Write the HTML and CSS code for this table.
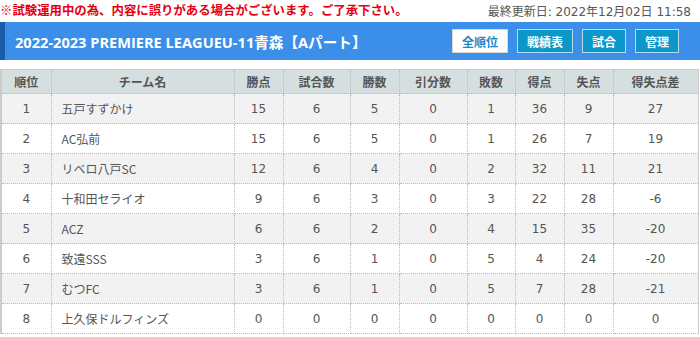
FILE: index.html
```html
<!DOCTYPE html>
<html lang="ja">
<head>
<meta charset="utf-8">
<link rel="stylesheet" href="styles.css">
</head>
<body>
<div class="top">
  <span class="notice">※試験運用中の為、内容に誤りがある場合がございます。ご了承下さい。</span>
  <span class="updated">最終更新日: 2022年12月02日 11:58</span>
</div>
<div class="bar">
  <h1 class="title">2022-2023 PREMIERE LEAGUEU-11青森【Aパート】</h1>
  <nav class="btns">
    <a class="btn active">全順位</a>
    <a class="btn">戦績表</a>
    <a class="btn">試合</a>
    <a class="btn">管理</a>
  </nav>
</div>
<table class="rank">
  <colgroup>
    <col class="c1"><col class="c2"><col class="c3"><col class="c4"><col class="c5">
    <col class="c6"><col class="c7"><col class="c8"><col class="c9"><col class="c10">
  </colgroup>
  <thead>
    <tr><th>順位</th><th>チーム名</th><th>勝点</th><th>試合数</th><th>勝数</th><th>引分数</th><th>敗数</th><th>得点</th><th>失点</th><th>得失点差</th></tr>
  </thead>
  <tbody>
    <tr><td>1</td><td class="team">五戸すずかけ</td><td>15</td><td>6</td><td>5</td><td>0</td><td>1</td><td>36</td><td>9</td><td>27</td></tr>
    <tr><td>2</td><td class="team">AC弘前</td><td>15</td><td>6</td><td>5</td><td>0</td><td>1</td><td>26</td><td>7</td><td>19</td></tr>
    <tr><td>3</td><td class="team">リベロ八戸SC</td><td>12</td><td>6</td><td>4</td><td>0</td><td>2</td><td>32</td><td>11</td><td>21</td></tr>
    <tr><td>4</td><td class="team">十和田セライオ</td><td>9</td><td>6</td><td>3</td><td>0</td><td>3</td><td>22</td><td>28</td><td>-6</td></tr>
    <tr><td>5</td><td class="team">ACZ</td><td>6</td><td>6</td><td>2</td><td>0</td><td>4</td><td>15</td><td>35</td><td>-20</td></tr>
    <tr><td>6</td><td class="team">致遠SSS</td><td>3</td><td>6</td><td>1</td><td>0</td><td>5</td><td>4</td><td>24</td><td>-20</td></tr>
    <tr><td>7</td><td class="team">むつFC</td><td>3</td><td>6</td><td>1</td><td>0</td><td>5</td><td>7</td><td>28</td><td>-21</td></tr>
    <tr><td>8</td><td class="team">上久保ドルフィンズ</td><td>0</td><td>0</td><td>0</td><td>0</td><td>0</td><td>0</td><td>0</td><td>0</td></tr>
  </tbody>
</table>
</body>
</html>
```
FILE: styles.css
```css
* { box-sizing: border-box; }
body {
  margin: 0;
  background: #fff;
  font-family: "DejaVu Sans", "Noto Sans CJK JP", sans-serif;
  color: #555;
}
.top {
  display: flex;
  justify-content: space-between;
  align-items: center;
  height: 20px;
  padding-right: 9px;
  font-size: 12px;
}
.notice {
  color: #e60012;
  font-weight: bold;
  font-size: 12.4px;
  font-family: "Noto Sans CJK JP", sans-serif;
}
.updated {
  color: #555;
  font-family: "DejaVu Sans", "Noto Sans CJK JP", sans-serif;
}
.bar {
  display: flex;
  align-items: center;
  justify-content: space-between;
  height: 38px;
  margin-top: 2px;
  background: #3b8fe8;
  border-left: 5px solid #1a5ca8;
  padding-left: 10px;
  padding-right: 21px;
}
.title {
  margin: 0;
  color: #fff;
  font-size: 14.6px;
  font-weight: bold;
  font-family: "Open Sans", "Noto Sans CJK JP", sans-serif;
}
.btns {
  display: flex;
  gap: 9px;
}
.btn {
  display: flex;
  align-items: center;
  justify-content: center;
  height: 24px;
  padding: 0 9px;
  background: #0b97c9;
  border: 1px solid #b9dcea;
  color: #fff;
  font-size: 12px;
  font-weight: bold;
  font-family: "Noto Sans CJK JP", sans-serif;
}
.btn.active {
  background: #fff;
  color: #1a8ac6;
  border-color: #d8d8d8;
}
.rank {
  margin-top: 9px;
  width: 697px;
  border-collapse: collapse;
  table-layout: fixed;
  font-size: 12px;
  border-left: 2px solid #ccc;
  border-right: 1px solid #ccc;
  border-top: 1px solid #ccc;
}
.c1 { width: 50px; }
.c2 { width: 183px; }
.c3 { width: 49px; }
.c4 { width: 67px; }
.c5 { width: 49px; }
.c6 { width: 68px; }
.c7 { width: 48px; }
.c8 { width: 49px; }
.c9 { width: 49px; }
.c10 { width: 85px; }
.rank th {
  height: 24px;
  background: #d5dfe0;
  color: #555;
  font-weight: bold;
  font-family: "Noto Sans CJK JP", sans-serif;
  border: 1px dotted #bbb;
  border-top: none;
  padding: 0;
}
.rank td {
  height: 30px;
  text-align: center;
  border: 1px dotted #bbb;
  padding: 0;
}
.rank tbody tr:nth-child(odd) td { background: #f2f2f2; }
.rank td.team {
  text-align: left;
  padding-left: 10px;
  font-family: "Noto Sans CJK JP", sans-serif;
}
.rank tr > :first-child { border-left: none; }
.rank tr > :last-child { border-right: none; }
```
